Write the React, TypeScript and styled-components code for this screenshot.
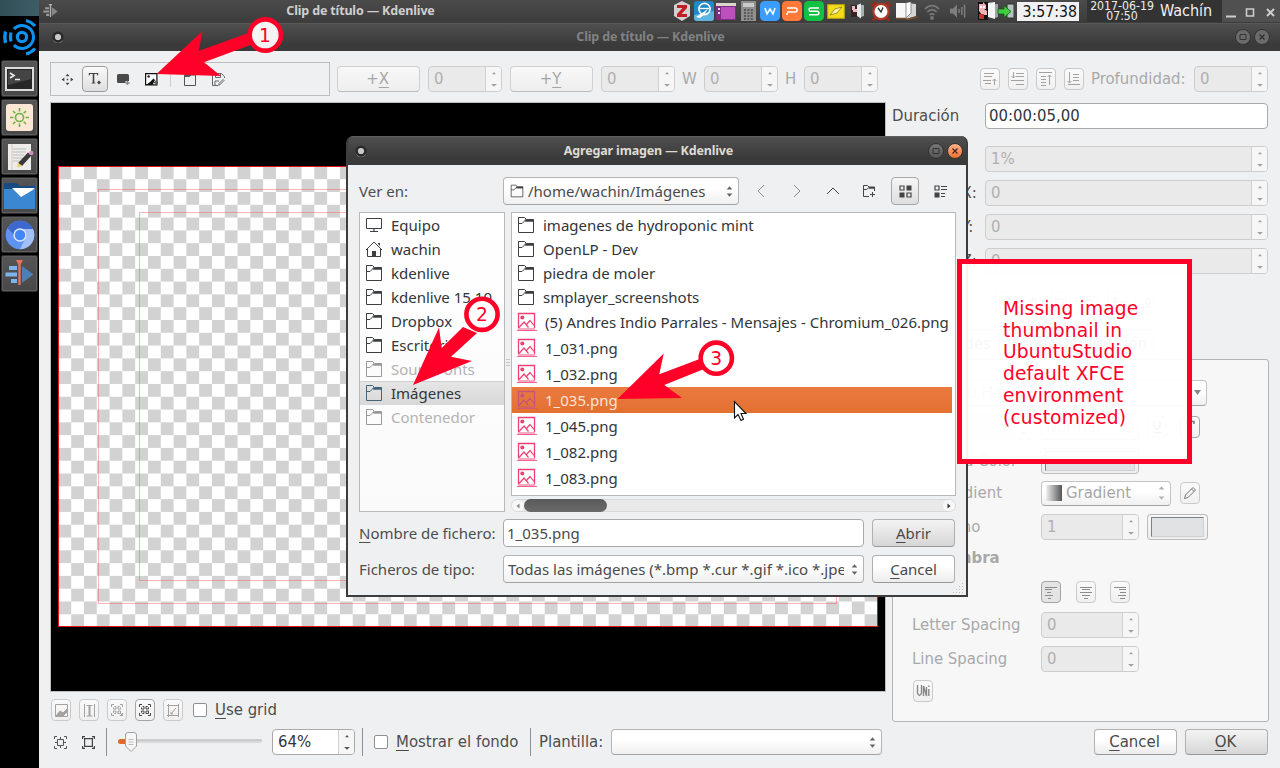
import React from "react";
import styled, { createGlobalStyle, css } from "styled-components";

const condensed = `"DejaVu Sans Condensed", "DejaVu Sans", sans-serif`;
const noto = `"Noto Sans", "Open Sans", sans-serif`;

const Global = createGlobalStyle`
  * { box-sizing: border-box; }
  body { margin: 0; background: #000; overflow: hidden; }
  svg { display: block; flex: none; }
  u { text-decoration: underline; text-decoration-thickness: 1px; text-underline-offset: 3px; }
`;

/* ---------- desktop ---------- */

const Desktop = styled.div`
  position: relative;
  display: flex;
  width: 1280px;
  height: 768px;
  background: #000;
  overflow: hidden;
  font: 16.6px/20px ${condensed};
  color: #31363b;
  white-space: nowrap;
`;
const Dock = styled.div`
  width: 39px;
  flex: none;
  display: flex;
  flex-direction: column;
  align-items: flex-start;
  padding-left: 1px;
`;
const Wallpaper = styled.div`
  height: 16px;
  width: 39px;
  margin-left: -1px;
  background: linear-gradient(90deg, #2f4f57, #3f5d66);
`;
const DockLogo = styled.div`
  height: 44px;
  padding-top: 3px;
`;
const DockTile = styled.div`
  width: 37px;
  height: 37px;
  margin-bottom: 2px;
  display: flex;
  align-items: center;
  justify-content: center;
  background: linear-gradient(#555, #484848);
  border: 1px solid #2e2e2e;
  border-radius: 2px;
  box-shadow: inset 0 0 0 1px #5e5e5e;
`;
const Screen = styled.div`
  flex: 1;
  display: flex;
  flex-direction: column;
`;
const Panel = styled.div`
  height: 23px;
  display: flex;
  align-items: center;
  background: linear-gradient(#4b4b4b, #3c3c3c);
  padding: 0 0 1px 4px;
  flex: none;
`;
const PanelTitle = styled.div<{ $w: number }>`
  width: ${(p) => p.$w}px;
  font: bold 12.5px/18px ${noto};
  letter-spacing: -0.16px;
  color: #cfcfcf;
  text-align: center;
`;
const TrayIcon = styled.div<{ $w: number; $gap?: number }>`
  width: ${(p) => p.$w}px;
  margin-right: ${(p) => p.$gap ?? 2}px;
  flex: none;
  height: 21px;
  display: flex;
  align-items: center;
  justify-content: center;
`;
const PanelClock = styled.div`
  width: 62px;
  height: 19px;
  padding-right: 2px;
  flex: none;
  text-align: right;
  background: #f1f1f1;
  color: #111;
  font-size: 15.7px;
  line-height: 20px;
  margin-right: 8px;
`;
const DateBlock = styled.div`
  width: 70px;
  height: 22px;
  flex: none;
  background: #333;
  color: #eee;
  font-size: 12.2px;
  line-height: 10px;
  padding-top: 1px;
  text-align: center;
`;
const UserName = styled.div`
  width: 65px;
  height: 22px;
  flex: none;
  background: #333;
  color: #f0f0f0;
  padding: 1px 0 0 3px;
  font-size: 16px;
  line-height: 20px;
`;
const WinControls = styled.div`
  flex: 1;
  height: 22px;
  display: flex;
  align-items: center;
  justify-content: center;
  background: #505050;
`;

/* ---------- window chrome ---------- */

const TitleBar = styled.div<{ $active?: boolean }>`
  height: ${(p) => (p.$active ? 29 : 28)}px;
  flex: none;
  display: flex;
  align-items: center;
  background: linear-gradient(#4f4f4f, #3a3a3a 75%);
  color: ${(p) => (p.$active ? "#dfdbd2" : "#828282")};
  font: bold 12.5px/20px ${noto};
  letter-spacing: -0.16px;
  ${(p) =>
    p.$active
      ? css`
          padding: 0 3px 1px 7px;
          border-top: 1px solid #5e5e5e;
        `
      : css`
          padding: 0 10px 1px 13px;
          border-top: 1px solid #585858;
        `}
`;
const TitleText = styled.div<{ $pad: number }>`
  flex: 1;
  text-align: center;
  padding-right: ${(p) => p.$pad}px;
`;
const TitleButtons = styled.div`
  display: flex;
  gap: 3px;
`;
const RoundButton = styled.div<{ $bg: string }>`
  width: 16px;
  height: 16px;
  border-radius: 50%;
  background: ${(p) => p.$bg};
  border: 1px solid #333;
  display: flex;
  align-items: center;
  justify-content: center;
`;
const TitleSpacer = styled.div`
  width: 40px;
  display: flex;
`;

const Body = styled.div`
  flex: 1;
  background: #eff0f1;
  padding: 11px 11px 0 11px;
  display: flex;
  flex-direction: column;
`;

/* ---------- shared controls ---------- */

const Button = styled.div<{ $w: number; $h?: number; $dim?: boolean; $primary?: boolean; $strong?: boolean }>`
  width: ${(p) => p.$w}px;
  height: ${(p) => p.$h ?? 26}px;
  flex: none;
  display: flex;
  align-items: center;
  justify-content: center;
  padding-right: ${(p) => (p.$h ? 0 : 2)}px;
  border-radius: 4px;
  border: 1px solid ${(p) => (p.$strong ? "#bbb" : p.$dim ? "#d0d0d0" : "#b0b0b0")};
  border-bottom-color: ${(p) => (p.$dim ? "#bcbcbc" : "#999")};
  background: ${(p) =>
    p.$primary ? "linear-gradient(#f4f4f4, #d6d6d6)" : p.$dim ? "linear-gradient(#f8f8f8, #eee)" : "linear-gradient(#fff 40%, #ececec)"};
  color: ${(p) => (p.$dim ? "#a6a6a6" : "#4a4a4a")};
`;
const MiniButton = styled.div<{ $on?: boolean; $pressed?: boolean; $ml?: number; $mt?: number }>`
  width: 20px;
  height: 22px;
  margin-left: ${(p) => p.$ml ?? 0}px;
  margin-top: ${(p) => p.$mt ?? 0}px;
  flex: none;
  border-radius: 4px;
  border: 1px solid ${(p) => (p.$on || p.$pressed ? "#a5a5a5" : "#cacaca")};
  background: ${(p) => (p.$pressed ? "#e4e4e4" : "linear-gradient(#fafafa, #f0f0f0)")};
  color: ${(p) => (p.$on ? "#444" : "#a2a2a2")};
  display: flex;
  align-items: center;
  justify-content: center;
`;
const SpinBox = styled.div<{ $w: number; $on?: boolean; $ml?: number }>`
  width: ${(p) => p.$w}px;
  height: 26px;
  margin-left: ${(p) => p.$ml ?? 0}px;
  flex: none;
  display: flex;
  border-radius: 4px;
  overflow: hidden;
  border: 1px solid ${(p) => (p.$on ? "#a9a9a9" : "#cdcdcd")};
  background: ${(p) => (p.$on ? "#fff" : "#eaeaea")};
  color: ${(p) => (p.$on ? "#31363b" : "#b0b0b0")};
`;
const SpinValue = styled.div`
  flex: 1;
  padding-left: 5px;
  line-height: 24px;
`;
const SpinArrows = styled.div<{ $on?: boolean }>`
  width: 16px;
  border-left: 1px solid #d0d0d0;
  background: #f6f6f6;
  color: ${(p) => (p.$on ? "#555" : "#a0a0a0")};
  display: flex;
  align-items: center;
  justify-content: center;
`;
const Combo = styled.div<{ $w: number; $h?: number; $dim?: boolean; $ml?: number }>`
  width: ${(p) => p.$w}px;
  height: ${(p) => p.$h ?? 26}px;
  margin-left: ${(p) => p.$ml ?? 0}px;
  flex: none;
  display: flex;
  align-items: center;
  justify-content: space-between;
  padding: 0 4px;
  border-radius: 4px;
  border: 1px solid ${(p) => (p.$dim ? "#c4c4c4" : "#b4b4b4")};
  border-bottom-color: #a4a4a4;
  background: linear-gradient(#fff 40%, #f0f0f0);
  color: ${(p) => (p.$dim ? "#a6a6a6" : "#4a4a4a")};
`;
const ComboText = styled.span<{ $pad?: number }>`
  flex: 1;
  overflow: hidden;
  margin-right: 6px;
  padding-left: ${(p) => p.$pad ?? 0}px;
  display: flex;
  align-items: center;
  gap: 4px;
`;
const Input = styled.div<{ $w: number; $h?: number }>`
  width: ${(p) => p.$w}px;
  height: ${(p) => p.$h ?? 26}px;
  flex: none;
  display: flex;
  align-items: center;
  padding-left: 3px;
  border-radius: 4px;
  border: 1px solid #aaa;
  background: #fff;
`;
const CheckBox = styled.div`
  width: 14px;
  height: 14px;
  border: 1px solid #909090;
  border-radius: 2px;
  background: #fff;
  flex: none;
`;
const Label = styled.div<{ $w?: number; $dim?: boolean; $bold?: boolean; $ml?: number; $indent?: number }>`
  ${(p) => p.$w !== undefined && `width: ${p.$w}px;`}
  margin-left: ${(p) => p.$ml ?? 0}px;
  padding-left: ${(p) => p.$indent ?? 0}px;
  flex: none;
  color: ${(p) => (p.$dim ? "#a9a9a9" : "#4d4d4d")};
  font-weight: ${(p) => (p.$bold ? "bold" : "normal")};
`;
const Divider = styled.div<{ $h: number; $ml?: number; $mr?: number; $light?: boolean }>`
  width: 1px;
  height: ${(p) => p.$h}px;
  margin: 0 ${(p) => p.$mr ?? 0}px 0 ${(p) => p.$ml ?? 0}px;
  background: ${(p) => (p.$light ? "#cfcfcf" : "#8d9095")};
  flex: none;
`;

const Updown = ({ gap = 4 }: { gap?: number }) => (
  <svg width="9" height={12 + gap} viewBox={`0 0 9 ${12 + gap}`} fill="currentColor" opacity=".85">
    <path d="M4.5 1.2L7.3 4.4H1.7Z" />
    <path d={`M1.7 ${7.6 + gap}H7.3L4.5 ${10.8 + gap}Z`} />
  </svg>
);
const Spin = ({ w, v, on, ml }: { w: number; v: string; on?: boolean; ml?: number }) => (
  <SpinBox $w={w} $on={on} $ml={ml}>
    <SpinValue>{v}</SpinValue>
    <SpinArrows $on={on}>
      <svg width="8" height="18" viewBox="0 0 8 18" fill="currentColor">
        <path d="M4 2L6 4.3H2Z" />
        <path d="M1.2 14H6.8L4 16.8Z" />
      </svg>
    </SpinArrows>
  </SpinBox>
);

/* ---------- title editor ---------- */

const TopRow = styled.div`
  display: flex;
  align-items: center;
  height: 34px;
`;
const ToolBox = styled.div`
  width: 280px;
  height: 34px;
  border: 1px solid #bdbdbd;
  display: flex;
  align-items: center;
  padding-left: 10px;
  margin-right: 7px;
  color: #444;
  flex: none;
`;
const ToolButton = styled.div`
  width: 26px;
  height: 26px;
  margin: 0 9px 0 8px;
  border: 1px solid #9d9d9d;
  border-radius: 4px;
  background: linear-gradient(#fafafa, #dedede);
  display: flex;
  align-items: center;
  justify-content: center;
`;
const Gap = styled.div<{ $w: number }>`
  width: ${(p) => p.$w}px;
  flex: none;
`;
const Middle = styled.div`
  display: flex;
  margin-top: 6px;
  height: 620px;
`;
const Stage = styled.div`
  width: 836px;
  height: 590px;
  flex: none;
  background: #000;
  border: 1px solid #bdbdbd;
  padding: 63px 0 0 7px;
`;
const Checker = styled.div`
  width: 820px;
  height: 461px;
  border: 1px solid #e01414;
  padding: 22px 40px 22px 39px;
  background: conic-gradient(#fff 25%, #d2d2d2 0 50%, #fff 0 75%, #d2d2d2 0) -0.6px -0.6px / 25.6px 25.6px;
`;
const SafeOuter = styled.div`
  height: 100%;
  border: 1px solid rgba(255, 60, 60, 0.38);
  padding: 22px 40px;
`;
const SafeInner = styled.div`
  height: 100%;
  border: 1px solid rgba(255, 60, 60, 0.38);
`;
const Side = styled.div`
  width: 377px;
  margin-left: 6px;
  padding-top: 1px;
  display: flex;
  flex-direction: column;
`;
const FormRow = styled.div<{ $mb?: number }>`
  display: flex;
  align-items: center;
  justify-content: space-between;
  height: 26px;
  margin-bottom: ${(p) => p.$mb ?? 8}px;
  padding-right: 1px;
  flex: none;
`;
const HLine = styled.div`
  height: 1px;
  background: #8d9095;
  margin-bottom: 10px;
`;
const AlignRow = styled.div`
  display: flex;
  gap: 8px;
  padding-left: 103px;
  margin-top: 9px;
`;
const Tabs = styled.div`
  display: flex;
  height: 30px;
  margin-top: 16px;
  align-items: center;
  color: #777;
`;
const Tab = styled.div<{ $w: number }>`
  width: ${(p) => p.$w}px;
  height: 30px;
  border: 1px solid #ccc;
  line-height: 28px;
  text-align: right;
  padding-right: 7px;
`;
const Pane = styled.div`
  height: 363px;
  flex: none;
  background: #f7f7f7;
  border: 1px solid #b4b4b4;
  border-radius: 3px;
  padding: 20px 0 0 19px;
`;
const PaneRow = styled.div<{ $h: number }>`
  display: flex;
  align-items: center;
  height: ${(p) => p.$h}px;
`;
const Swatch = styled.div`
  width: calc(100% - 4px);
  margin-left: 2px;
  height: 20px;
  background: #e1e2e4;
  border: 1px solid #cfd0d2;
  border-top-color: #7d8085;
  border-left-color: #7d8085;
`;
const Footer = styled.div`
  display: flex;
  flex-direction: column;
  margin-top: -23px;
  z-index: 1;
`;
const FootRow = styled.div<{ $h: number; $pad?: number }>`
  display: flex;
  align-items: center;
  height: ${(p) => p.$h}px;
  padding-left: ${(p) => p.$pad ?? 0}px;
`;
const Slider = styled.div`
  width: 145px;
  flex: none;
`;

/* ---------- file dialog ---------- */

const Dialog = styled.div`
  position: absolute;
  left: 346px;
  top: 136px;
  width: 622px;
  height: 461px;
  border: 2px solid #3d3d3d;
  border-top: 0;
  border-radius: 7px 7px 0 0;
  background: #3d3d3d;
  display: flex;
  flex-direction: column;
  overflow: hidden;
  font: 15px/20px ${noto};
`;
const DialogBody = styled.div`
  flex: 1;
  background: #eff0f1;
  padding: 12px 10px 0 11px;
  display: flex;
  flex-direction: column;
`;
const DRow = styled.div<{ $mb: number }>`
  display: flex;
  align-items: center;
  height: 28px;
  margin-bottom: ${(p) => p.$mb}px;
  color: #4a4a4a;
`;
const NavIcon = styled.div<{ $dim?: boolean }>`
  width: 36px;
  display: flex;
  justify-content: center;
  color: ${(p) => (p.$dim ? "#8c8c8c" : "#444")};
`;
const ViewButton = styled.div`
  width: 28px;
  height: 28px;
  margin: 0 15px 0 4px;
  border: 1px solid #a8a8a8;
  border-radius: 4px;
  background: linear-gradient(#f6f6f6, #dedede);
  display: flex;
  align-items: center;
  justify-content: center;
`;
const Lists = styled.div`
  display: flex;
  height: 300px;
  margin-bottom: 7px;
`;
const Places = styled.div`
  width: 146px;
  flex: none;
  border: 1px solid #b9b9b9;
  background: linear-gradient(#fff, #fafafa);
`;
const Place = styled.div<{ $state?: "off" | "sel" }>`
  height: 24px;
  display: flex;
  align-items: center;
  gap: 8px;
  padding-left: 5px;
  color: ${(p) => (p.$state === "off" ? "#b3b3b3" : "#31363b")};
  ${(p) =>
    p.$state === "sel" &&
    css`
      background: linear-gradient(#e6e6e6, #d8d8d8);
      box-shadow: inset 0 1px #cfcfcf;
    `}
`;
const Splitter = styled.div`
  width: 6px;
  display: flex;
  align-items: center;
  justify-content: center;
`;
const FilePane = styled.div`
  width: 445px;
  flex: none;
  display: flex;
  flex-direction: column;
`;
const Files = styled.div`
  height: 284px;
  border: 1px solid #b9b9b9;
  background: #fff;
  padding: 0 3px 0 0;
  margin-bottom: 3px;
`;
const Folder = styled.div`
  height: 24px;
  display: flex;
  align-items: center;
  gap: 8px;
  padding-left: 5px;
`;
const Picture = styled.div<{ $sel?: boolean }>`
  height: 26px;
  display: flex;
  align-items: center;
  gap: 8px;
  padding-left: 5px;
  color: ${(p) => (p.$sel ? "#f7e4da" : "#31363b")};
  background: ${(p) => (p.$sel ? "linear-gradient(#eb7a40, #e27030)" : "none")};
`;
const ScrollBar = styled.div`
  height: 13px;
  border: 1px solid #d8d8d8;
  border-radius: 7px;
  background: #e9e9e9;
  display: flex;
  align-items: center;
  justify-content: space-between;
  color: #555;
`;
const ScrollEnd = styled.div<{ $faint?: boolean }>`
  width: 12px;
  height: 11px;
  border-radius: 6px;
  background: #f7f7f7;
  display: flex;
  align-items: center;
  justify-content: center;
  color: ${(p) => (p.$faint ? "#8a8a8a" : "#333")};
`;
const Thumb = styled.div`
  width: 83px;
  height: 13px;
  border-radius: 7px;
  background: linear-gradient(#5a5a5a, #6a6a6a);
`;
const Grip = styled.div`
  align-self: flex-end;
  margin: -1px -8px 0 0;
`;

/* ---------- annotations ---------- */

const Note = styled.div`
  position: absolute;
  left: 957px;
  top: 259px;
  width: 235px;
  height: 205px;
  border: 5px solid #ff0028;
  background: rgba(255, 255, 255, 0.945);
  color: #ff0028;
  font: 18.67px/21.7px "DejaVu Sans", sans-serif;
  letter-spacing: 0.14px;
  padding: 34px 0 0 41px;
  white-space: pre;
`;
const Overlay = styled.svg`
  position: absolute;
  left: 0;
  top: 0;
  pointer-events: none;
`;

/* ---------- icons ---------- */

const FolderIcon = ({ c = "#3d4043", s = 18 }: { c?: string; s?: number }) => (
  <svg width={s} height={s} viewBox="0 0 18 18" fill="none" stroke={c}>
    <path d="M1.5 1.5H7.5L9.5 3.5H16.5V16.5H1.5ZM1.5 7.5H5L9 3.5" />
    <path d="M8 5.5L9.5 4H16.5V5.5Z" fill={c} stroke="none" />
    <path d="M8 4.5H16.5" strokeWidth="2" />
  </svg>
);
const PictureIcon = ({ c = "#ef4070" }: { c?: string }) => (
  <svg width="20" height="20" viewBox="0 0 20 20" fill="none" stroke={c}>
    <path d="M1.5 16V1.5H17.5V16" strokeWidth="1.3" />
    <path d="M0 18.5H20" strokeWidth="1" opacity=".8" />
    <path d="M1 16H18V18H1Z" fill={c} stroke="none" opacity=".45" />
    <circle cx="5.3" cy="5.5" r="2" fill={c} stroke="none" />
    <path d="M2 15.5L7 10L11.5 15.5M9.5 12.5L13 8.5L17 13.5" strokeWidth="1.2" />
  </svg>
);
const PcIcon = () => (
  <svg width="18" height="18" viewBox="0 0 18 18" fill="none" stroke="#3d4043">
    <path d="M1.5 2.5H16.5V12.5H1.5Z" />
    <path d="M9 12.5V15M5 15.5H13" strokeWidth="1.2" />
  </svg>
);
const HomeIcon = () => (
  <svg width="18" height="18" viewBox="0 0 18 18" fill="none" stroke="#3d4043">
    <path d="M2.5 9V16.5H15.5V9M1 10L9 2L17 10" />
    <path d="M7 11H11V16.5H7ZM13 3H15V6L13 4Z" fill="#3d4043" stroke="none" />
  </svg>
);
const Knob = () => (
  <svg width="12" height="12" viewBox="0 0 12 12">
    <circle cx="6" cy="6" r="5.6" fill="#2b2b2b" />
    <path d="M1.5 9.5A5 5 0 0 0 10.5 9.5" fill="none" stroke="#777" />
    <circle cx="6" cy="6" r="3.1" fill="#c9c9c9" />
  </svg>
);
const KdenliveIcon = ({ gray }: { gray?: boolean }) => {
  const k = gray ? ["#9a9a9a", "#b0b0b0", "#888"] : ["#7cb4ec", "#e8705f", "#4a7fb8"];
  const s = gray ? 15 : 29;
  return (
    <svg width={s} height={s * 0.9} viewBox="0 0 29 26">
      <path d="M4 6H12V10H4ZM0.5 12.5H12V16.5H0.5ZM6 19H12V23H6Z" fill={k[0]} />
      <path d="M17 6L28.5 14.5L17 23Z" fill={k[2]} />
      <path d="M11 0H18L15.7 4.5V25H13.3V4.5Z" fill={k[1]} />
    </svg>
  );
};
const LinesIcon = ({ kind }: { kind: number }) => (
  <svg width="16" height="16" viewBox="0 0 16 16" fill="none" stroke="currentColor">
    {kind === 0 && <path d="M2 2.5H12M2 5.5H10M1 9.5H9M3 12.5H9M12.5 14V8M10.5 10L12.5 8L14.5 10" />}
    {kind === 1 && <path d="M6 2.5H14M6 5.5H14M1 9.5H14M6 13.5H14M3.5 1V7M1.5 5L3.5 7L5.5 5" />}
    {kind === 2 && <path d="M1 1.5H14M3 5.5H8M3 8.5H8M3 11.5H8M3 14.5H8M11.5 14V4M9.5 6L11.5 4L13.5 6" />}
    {kind === 3 && <path d="M7 3.5H13M7 6.5H13M7 9.5H13M2 13.5H14M3.5 1V12M1.5 10L3.5 12L5.5 10" />}
  </svg>
);
const TextAlign = ({ d }: { d: string }) => (
  <svg width="14" height="16" viewBox="0 0 14 16" fill="none" stroke="#8c8c8c">
    <path d={d} />
  </svg>
);
const GroupIcon = ({ x }: { x?: boolean }) => (
  <svg width="14" height="14" viewBox="0 0 14 14" fill="none" stroke="currentColor">
    <path d="M1.5 4V1.5H4M10 1.5H12.5V4M1.5 10V12.5H4M12.5 10V12.5H10" />
    <path d="M4.5 3.5H6V6H3.5V4.5M8 6V3.5H9.5L10.5 4.5V6ZM3.5 8H6V10.5H4.5L3.5 9.5ZM8 8H10.5V10.5H8Z" />
    {x && <path d="M10 10L13 13M13 10L10 13" />}
  </svg>
);

const Tray = () => (
  <>
    <TrayIcon $w={18}>
      <svg width="16" height="20" viewBox="0 0 16 20">
        <path d="M8 0L16 4V15L8 20L0 15V4Z" fill="#d4d0d0" />
        <path d="M3 4H13V7L7.5 13H13V16H3V13L8.5 7H3Z" fill="#c21d24" />
      </svg>
    </TrayIcon>
    <TrayIcon $w={21}>
      <svg width="20" height="20" viewBox="0 0 20 20">
        <rect width="20" height="20" rx="3" fill="#2089c9" />
        <path d="M0 14L20 10V17Q20 20 17 20H3Q0 20 0 17Z" fill="#5fb4e0" />
        <circle cx="10.5" cy="8" r="5.6" fill="none" stroke="#fff" strokeWidth="1.6" />
        <path d="M6 7.5H15" stroke="#fff" strokeWidth="1.4" />
        <path d="M2 16L14 8L10 14L6 17Z" fill="#fff" />
      </svg>
    </TrayIcon>
    <TrayIcon $w={20} $gap={4}>
      <svg width="20" height="17" viewBox="0 0 20 17">
        <rect width="20" height="17" rx="1" fill="#7b2e86" />
        <rect x="5" y="4" width="14" height="12" fill="#bb4fbc" />
        <rect width="20" height="3" fill="#dcd6cc" />
        <path d="M2 5h2v2H2zM2 9h2v2H2z" fill="#e8d8ea" />
      </svg>
    </TrayIcon>
    <TrayIcon $w={16} $gap={4}>
      <svg width="15" height="20" viewBox="0 0 15 20">
        <rect width="15" height="20" fill="#8f8f8f" />
        <rect x="2" y="2" width="11" height="4" fill="#c9cdc9" />
        <path d="M3 9H13M3 12H13M3 15H13M3 18H13" stroke="#4a4a4a" strokeWidth="1.6" strokeDasharray="2 1.4" />
      </svg>
    </TrayIcon>
    {[
      ["#3b9dff", "M5 7L7 13L10 8L13 13L15 7"],
      ["#ff7a38", "M5 14V12M5 7H13.5C15.5 7 15.5 11 13.5 11H5"],
      ["#10c144", "M15 7H7C4.5 7 4.5 10.3 7 10.3H13C15.5 10.3 15.5 13.8 13 13.8H5"],
    ].map(([bg, d]) => (
      <TrayIcon key={bg} $w={20}>
        <svg width="20" height="20" viewBox="0 0 20 20">
          <rect width="20" height="20" rx="4.5" fill={bg} />
          <path d={d} fill="none" stroke="#fff" strokeWidth="1.5" />
        </svg>
      </TrayIcon>
    ))}
    <TrayIcon $w={20} $gap={3}>
      <svg width="18" height="15" viewBox="0 0 18 15">
        <rect x=".7" y=".7" width="16.6" height="13.6" fill="#f3dc1c" stroke="#c2aa0c" />
        <path d="M3 11L8 5L15 3L10 9Z" fill="#fff6a8" stroke="#8a7a12" strokeWidth=".8" />
      </svg>
    </TrayIcon>
    <TrayIcon $w={16} $gap={6}>
      <svg width="15" height="16" viewBox="0 0 15 16">
        <path d="M1 2H8V14H1Z" fill="#332425" />
        <path d="M2 3H5V6H7V9H3V7H2Z" fill="#f0b9c0" />
        <path d="M7 2L11 0.5V15.5L7 13Z" fill="#e8e8e8" />
        <path d="M11 2H14V13L11 14Z" fill="#a4b0b4" />
      </svg>
    </TrayIcon>
    <TrayIcon $w={20} $gap={4}>
      <svg width="20" height="20" viewBox="0 0 20 20">
        <path d="M4 17L2 20M16 17L18 20M1 5L5 1M19 5L15 1" stroke="#9c2a1c" strokeWidth="3" />
        <circle cx="10" cy="10.5" r="7.6" fill="#fdfdfd" stroke="#b23a25" strokeWidth="2.2" />
        <path d="M7 7L10 11L12 6.5" fill="none" stroke="#333" strokeWidth="1.4" />
      </svg>
    </TrayIcon>
    <TrayIcon $w={24} $gap={4}>
      <svg width="22" height="18" viewBox="0 0 22 18">
        <path d="M0 1H10V16H0Z" fill="#f7f7f7" />
        <path d="M10 1L20 2V14L10 17Z" fill="#d5d5d5" />
        <path d="M10 1L15 0V11L10 16Z" fill="#fff" />
        <path d="M10 1V16M15 0V11L10 16" stroke="#777" strokeWidth=".8" fill="none" />
        <path d="M0 16.5H9L11 17.5L22 15" stroke="#7a4b2a" strokeWidth="1.5" fill="none" />
      </svg>
    </TrayIcon>
    <TrayIcon $w={18} $gap={8}>
      <svg width="16" height="17" viewBox="0 0 16 17" fill="none" stroke="#777" strokeWidth="1.8">
        <path d="M1 6C5 1.5 11 1.5 15 6M3.3 9C6 6 10 6 12.7 9M5.6 12C7 10.5 9 10.5 10.4 12" />
        <circle cx="8" cy="15" r="1" fill="#777" />
      </svg>
    </TrayIcon>
    <TrayIcon $w={17} $gap={11}>
      <svg width="16" height="16" viewBox="0 0 16 16" fill="none" stroke="#7d7d7d" strokeWidth="1.5">
        <path d="M0 5.5H3L7 1.5V14.5L3 10.5H0Z" fill="#7d7d7d" stroke="none" />
        <path d="M9 6V10M11.8 4V12M14.6 1.5V14.5" />
      </svg>
    </TrayIcon>
    <TrayIcon $w={37} $gap={3}>
      <svg width="36" height="18" viewBox="0 0 36 18">
        <path d="M0 0H10V18H0Z" fill="#111" />
        <path d="M1 2H5V0L8 3V7H6L9 9V13H4L1 9Z" fill="#f4b0b8" />
        <path d="M1 12H6V17H1Z" fill="#c83030" />
        <path d="M2 4h2v2H2zM5 4h2v2H5z" fill="#fff" />
        <path d="M10 1L17 0V17L10 15Z" fill="#f4f4f4" />
        <path d="M17 2H20V15L17 16Z" fill="#9aa6a2" />
        <path d="M29 2H36V16H29Z" fill="#b4c4c0" stroke="#333" />
        <path d="M20 7H26V3.5L33 9.5L26 15.5V12H20Z" fill="#3fce3f" stroke="#125812" strokeWidth=".8" />
      </svg>
    </TrayIcon>
  </>
);

const tools = (
  <ToolBox>
    <svg width="13" height="13" viewBox="0 0 13 13" fill="currentColor">
      <path d="M6.5 0L8.7 3H4.3ZM6.5 13L8.7 10H4.3ZM0 6.5L3 4.3V8.7ZM13 6.5L10 4.3V8.7ZM5.7 5.7h1.6v1.6H5.7z" transform="translate(.65 .65) scale(.9)" />
    </svg>
    <ToolButton>
      <svg width="14" height="14" viewBox="0 0 14 14">
        <path d="M.8 1H10.2V3.5H9.5L8.8 2H6.3V10.5L7.5 11V11.5H3.5V11L4.7 10.5V2H2.2L1.5 3.5H.8Z" fill="#444" />
        <path d="M11 8.5L13 10.5L11 12.5L9 10.5Z" fill="#444" />
      </svg>
    </ToolButton>
    <svg width="13" height="12" viewBox="0 0 13 12">
      <path d="M1.5 1H10.5Q12 1 12 2.5V8H8.5V10H1.5Q0 10 0 8.5V2.5Q0 1 1.5 1Z" fill="#4a4a4a" />
      <path d="M10.5 8V12M8.5 10H12.5" stroke="#888" strokeWidth="1.4" />
    </svg>
    <Gap $w={15} />
    <svg width="13" height="13" viewBox="0 0 13 13">
      <path d="M.6.6H11.9V11.9H.6Z" fill="#fff" stroke="#111" strokeWidth="1.2" />
      <path d="M1 12L5 9L8.5 5.5L10 7L7.5 12Z" fill="#111" />
      <path d="M9 9.5H13M11 7.5V12.5" stroke="#555" strokeWidth="1.4" />
      <circle cx="3.6" cy="3.4" r="1.2" fill="#111" />
    </svg>
    <Divider $h={16} $ml={12} $mr={13} $light />
    <svg width="12" height="13" viewBox="0 0 12 13" fill="none" stroke="#555">
      <path d="M.5 1.5H11.5V12.5H.5Z" />
      <path d="M.5 3H5L7 1.5H11.5" strokeWidth="2" />
    </svg>
    <Gap $w={16} />
    <svg width="13" height="13" viewBox="0 0 13 13" fill="none" stroke="#666">
      <path d="M6 12.5H.5V.5H9.5L12.5 3.5V5M3.5 1V4.5H8.5V1M3 12V8H7M7 12.5L12 7.5L11 6.5L7 10.5Z" />
    </svg>
  </ToolBox>
);

const places: [string, ("off" | "sel")?][] = [
  ["Equipo"], ["wachin"], ["kdenlive"], ["kdenlive 15.10"], ["Dropbox"], ["Escritorio"], ["SoundFonts", "off"], ["Imágenes", "sel"], ["Contenedor", "off"],
];
const folders = ["imagenes de hydroponic mint", "OpenLP - Dev", "piedra de moler", "smplayer_screenshots"];
const pictures = ["(5) Andres Indio Parrales - Mensajes - Chromium_026.png", "1_031.png", "1_032.png", "1_035.png", "1_045.png", "1_082.png", "1_083.png"];

const FileDialog = () => (
  <Dialog>
    <TitleBar $active>
      <TitleSpacer><Knob /></TitleSpacer>
      <TitleText $pad={26}>Agregar imagen — Kdenlive</TitleText>
      <TitleButtons>
        <RoundButton $bg="linear-gradient(#777,#555)"><svg width="8" height="8"><path d="M1 1.5H7V6.5H1Z" fill="none" stroke="#333" /></svg></RoundButton>
        <RoundButton $bg="linear-gradient(#fbb48c,#f07030)"><svg width="6" height="6"><path d="M.5 .5L5.5 5.5M5.5 .5L.5 5.5" stroke="#4a2818" strokeWidth="1.3" /></svg></RoundButton>
      </TitleButtons>
    </TitleBar>
    <DialogBody>
      <DRow $mb={7}>
        <Label $w={144}>Ver en:</Label>
        <Combo $w={236} $h={28}>
          <ComboText $pad={2}><FolderIcon s={14} />/home/wachin/Imágenes</ComboText>
          <Updown gap={1} />
        </Combo>
        <Gap $w={4} />
        <NavIcon $dim><svg width="8" height="14" fill="none" stroke="currentColor"><path d="M7 1L1 7L7 13" /></svg></NavIcon>
        <NavIcon $dim><svg width="8" height="14" fill="none" stroke="currentColor"><path d="M1 1L7 7L1 13" /></svg></NavIcon>
        <NavIcon><svg width="14" height="8" fill="none" stroke="currentColor"><path d="M1 7L7 1L13 7" /></svg></NavIcon>
        <NavIcon>
          <svg width="14" height="14" viewBox="0 0 14 14" fill="none" stroke="currentColor">
            <path d="M7 12.5H1.5V1.5H5.5L7 3H12.5V7M1.5 5.5H4.5L7 3.5H12.5" />
            <path d="M7 4H12.5" strokeWidth="1.5" />
            <path d="M10.5 8V13M8 10.5H13" />
          </svg>
        </NavIcon>
        <ViewButton>
          <svg width="13" height="13" viewBox="0 0 13 13" fill="none" stroke="#444">
            <path d="M1 1H5V5H1ZM8 8H12V12H8Z" strokeWidth="1.2" />
            <path d="M7.5.5H12.5V5.5H7.5ZM.5 7.5H5.5V12.5H.5Z" fill="#444" stroke="none" />
          </svg>
        </ViewButton>
        <svg width="14" height="13" viewBox="0 0 14 13" fill="none" stroke="#444">
          <path d="M1 1H5V5H1Z" strokeWidth="1.2" />
          <path d="M.5 7.5H5.5V12.5H.5Z" fill="#444" stroke="none" />
          <path d="M7 1.5H13M7 4.5H13M7 8.5H11M7 11.5H11" />
        </svg>
      </DRow>
      <Lists>
        <Places>
          {places.map(([n, st], i) => (
            <Place key={n} $state={st}>
              {i === 0 ? <PcIcon /> : i === 1 ? <HomeIcon /> : <FolderIcon c={st === "off" ? "#999" : st === "sel" ? "#456478" : "#3d4043"} />}
              {n}
            </Place>
          ))}
        </Places>
        <Splitter>
          <svg width="4" height="9" stroke="#c4c4c4"><path d="M0 1.5H4M0 4.5H4M0 7.5H4" /></svg>
        </Splitter>
        <FilePane>
          <Files>
            {folders.map((n) => <Folder key={n}><FolderIcon />{n}</Folder>)}
            {pictures.map((n) => (
              <Picture key={n} $sel={n === "1_035.png"}>
                <PictureIcon c={n === "1_035.png" ? "#c4557a" : undefined} />
                {n}
              </Picture>
            ))}
          </Files>
          <ScrollBar>
            <ScrollEnd $faint><svg width="4" height="6" fill="currentColor"><path d="M3.5 .5V5.5L.5 3Z" /></svg></ScrollEnd>
            <Thumb />
            <Gap $w={336} />
            <ScrollEnd><svg width="4" height="6" fill="currentColor"><path d="M.5 .5V5.5L3.5 3Z" /></svg></ScrollEnd>
          </ScrollBar>
        </FilePane>
      </Lists>
      <DRow $mb={8}>
        <Label $w={144}><u>N</u>ombre de fichero:</Label>
        <Input $w={361} $h={28}>1_035.png</Input>
        <Gap $w={8} />
        <Button $w={83} $h={28} $primary><u>A</u>brir</Button>
      </DRow>
      <DRow $mb={0}>
        <Label $w={144}>Ficheros de tipo:</Label>
        <Combo $w={361} $h={28}>
          <ComboText>Todas las imágenes (*.bmp *.cur *.gif *.ico *.jpe</ComboText>
          <Updown gap={1} />
        </Combo>
        <Gap $w={8} />
        <Button $w={83} $h={28}><u>C</u>ancel</Button>
      </DRow>
      <Grip>
        <svg width="11" height="11" viewBox="0 0 11 11" stroke="#c0c0c0" strokeWidth="1" strokeDasharray="1 2">
          <path d="M9 1.5H11M6 4.5H11M3 7.5H11M0 10.5H11" />
        </svg>
      </Grip>
    </DialogBody>
  </Dialog>
);

export default function App() {
  return (
    <>
      <Global />
      <Desktop>
        <Dock>
          <Wallpaper />
          <DockLogo>
            <svg width="35" height="37" viewBox="0 0 35 37" fill="none" stroke="#0b93f0" strokeWidth="3.2">
              <circle cx="21" cy="18" r="4.6" />
              <path d="M12.9 9.9A11.5 11.5 0 0 1 31.5 13.3M31.5 22.7A11.5 11.5 0 0 1 12.9 26.1M31.5 13.3A11.5 11.5 0 0 1 31.5 22.7" strokeWidth="3" />
              <path d="M25 1.5A17.5 17.5 0 0 1 34 7M34 29.5A17.5 17.5 0 0 1 25 35M10 13.5Q9 18 10 22.5" />
              <path d="M4.5 12.5Q3 18 4.5 24" strokeWidth="3.4" />
            </svg>
          </DockLogo>
          <DockTile>
            <svg width="29" height="24" viewBox="0 0 29 24">
              <rect x="1" y="1" width="27" height="22" fill="#262626" stroke="#dcdcdc" strokeWidth="2" />
              <path d="M3 3H26V12L3 18Z" fill="#444" />
              <path d="M5 6L9 8.5L5 11M10 12.5H15" stroke="#eee" strokeWidth="1.6" fill="none" />
            </svg>
          </DockTile>
          <DockTile>
            <svg width="27" height="27" viewBox="0 0 27 27">
              <rect width="27" height="27" rx="3" fill="#fce6d4" />
              <circle cx="13.5" cy="13.5" r="4" fill="none" stroke="#6db33f" strokeWidth="1.6" />
              <path d="M13.5 4V7.5M13.5 19.5V23M4 13.5H7.5M19.5 13.5H23M7 7L9.3 9.3M17.7 17.7L20 20M20 7L17.7 9.3M9.3 17.7L7 20" stroke="#6db33f" strokeWidth="1.6" />
            </svg>
          </DockTile>
          <DockTile>
            <svg width="28" height="28" viewBox="0 0 28 28">
              <path d="M2 1H25V27H2Z" fill="#ececea" />
              <path d="M6 1V27" stroke="#efb0b0" strokeWidth=".7" />
              <path d="M7 6H20M7 9H20M7 12H18M7 15H16M7 18H13" stroke="#bdbdbd" />
              <path d="M12 20L22 9.5L25.5 12.5L16 23Z" fill="#3a3a3a" />
              <path d="M12 19.5L16 23L11 24.5Z" fill="#e5d267" />
              <circle cx="25.3" cy="10" r="2.2" fill="#d68ac4" />
            </svg>
          </DockTile>
          <DockTile>
            <svg width="31" height="27" viewBox="0 0 31 27">
              <path d="M0 1H12L16 4H31V10H0Z" fill="#174c82" />
              <path d="M0 7H31V27H0Z" fill="#3b87d0" />
              <path d="M8 6H31L28 8.5L17 15Z" fill="#fff" />
            </svg>
          </DockTile>
          <DockTile>
            <svg width="30" height="30" viewBox="0 0 30 30">
              <circle cx="15" cy="15" r="14.3" fill="#5f93f2" />
              <path d="M2.5 8A14.3 14.3 0 0 1 28 9H15A6 6 0 0 0 9 15Z" fill="#3d69cf" />
              <path d="M28 9A14.3 14.3 0 0 1 15 29.3L20.5 18A6 6 0 0 0 18 9Z" fill="#a3c0f8" />
              <circle cx="15" cy="15" r="6.7" fill="#dbe6fc" />
              <circle cx="15" cy="15" r="5.2" fill="#4285f4" />
            </svg>
          </DockTile>
          <DockTile><KdenliveIcon /></DockTile>
        </Dock>
        <Screen>
          <Panel>
            <KdenliveIcon gray />
            <PanelTitle $w={605}>Clip de título — Kdenlive</PanelTitle>
            <Gap $w={10} />
            <Tray />
            <PanelClock>3:57:38</PanelClock>
            <DateBlock>2017-06-19<br />07:50</DateBlock>
            <UserName>Wachín</UserName>
            <WinControls>
              <svg width="50" height="14" viewBox="0 0 50 14" fill="none" stroke="#ccc">
                <path d="M0 12.5H10" strokeWidth="2" />
                <path d="M20.5 5H27.5V12H20.5Z" strokeWidth="1.6" />
                <path d="M41 5L48 12M48 5L41 12" strokeWidth="2" />
              </svg>
            </WinControls>
          </Panel>
          <TitleBar>
            <TitleSpacer><Knob /></TitleSpacer>
            <TitleText $pad={26}>Clip de título — Kdenlive</TitleText>
            <TitleButtons>
              <RoundButton $bg="#6b6b6b"><svg width="8" height="8"><path d="M1 1.5H7V6.5H1Z" fill="none" stroke="#333" /></svg></RoundButton>
              <RoundButton $bg="#6b6b6b"><svg width="6" height="6"><path d="M.5 .5L5.5 5.5M5.5 .5L.5 5.5" stroke="#2d2d2d" strokeWidth="1.2" /></svg></RoundButton>
            </TitleButtons>
          </TitleBar>
          <Body>
            <TopRow>
              {tools}
              <Button $w={83} $dim>+<u>X</u></Button>
              <Spin w={74} v="0" ml={8} />
              <Gap $w={8} />
              <Button $w={83} $dim>+<u>Y</u></Button>
              <Spin w={74} v="0" ml={8} />
              <Label $dim $ml={7} $w={14}>W</Label>
              <Spin w={74} v="0" ml={8} />
              <Label $dim $ml={7} $w={11}>H</Label>
              <Spin w={74} v="0" ml={8} />
              <Gap $w={102} />
              {[0, 1, 2, 3].map((k) => (
                <React.Fragment key={k}>
                  <MiniButton><LinesIcon kind={k} /></MiniButton>
                  <Gap $w={k < 3 ? 8 : 7} />
                </React.Fragment>
              ))}
              <Label $dim $w={95}>Profundidad:</Label>
              <Spin w={74} v="0" ml={8} />
            </TopRow>
            <Middle>
              <Stage>
                <Checker><SafeOuter><SafeInner /></SafeOuter></Checker>
              </Stage>
              <Side>
                <FormRow $mb={7}>
                  <Label>Duración</Label>
                  <Input $w={283}>00:00:05,00</Input>
                </FormRow>
                <HLine />
                <FormRow><Label>Zoom:</Label><Spin w={283} v="1%" /></FormRow>
                <FormRow><Label>Rotación X:</Label><Spin w={283} v="0" /></FormRow>
                <FormRow><Label>Rotación Y:</Label><Spin w={283} v="0" /></FormRow>
                <FormRow><Label>Rotación Z:</Label><Spin w={283} v="0" /></FormRow>
                <AlignRow>
                  {["M2 1V13M5 4H12V10H5Z", "M7 1V13M4 4H10V10H4Z", "M12 1V13M2 4H9V10H2Z", "M1 2H13M4 5H10V12H4Z", "M1 7H13M4 3H6V11H4Z", "M1 12H13M8 3H12V9H8Z"].map((d) => (
                    <MiniButton key={d}><svg width="14" height="14" fill="none" stroke="#777"><path d={d} /></svg></MiniButton>
                  ))}
                </AlignRow>
                <Tabs>
                  <Tab $w={107}>Propiedades</Tab>
                  <Tab $w={66}>Fondo</Tab>
                  <Tab $w={90}>Animación</Tab>
                </Tabs>
                <Pane>
                  <PaneRow $h={26}>
                    <Combo $w={295} $dim>
                      <ComboText $pad={5}>Ubuntu Header</ComboText>
                      <svg width="9" height="6" fill="#888"><path d="M1 0H8L4.5 5Z" /></svg>
                    </Combo>
                  </PaneRow>
                  <PaneRow $h={42}>
                    <Spin w={120} v="" />
                    <Combo $w={98} $dim $ml={9}><ComboText>Normal</ComboText><Updown /></Combo>
                    <MiniButton $ml={8}><svg width="12" height="14" fill="none" stroke="#555" strokeWidth="1.5"><path d="M3 1V7Q6 11 9 7V1M2 12.5H10" /></svg></MiniButton>
                    <MiniButton $ml={13} $on><svg width="10" height="14" fill="none" stroke="#777" strokeWidth="1.5"><path d="M1 4V1.5H9V4M6 1.5L4 12.5M2 12.5H6" /></svg></MiniButton>
                  </PaneRow>
                  <PaneRow $h={25}>
                    <Label $dim $w={129} $indent={25}>Solid Color</Label>
                    <Button $w={98} $dim $strong><Swatch /></Button>
                  </PaneRow>
                  <PaneRow $h={40}>
                    <Label $dim $w={129} $indent={25}>Gradient</Label>
                    <Combo $w={130} $dim $h={25}>
                      <ComboText>
                        <svg width="16" height="16"><defs><linearGradient id="g"><stop stopColor="#f0f0f0" /><stop offset="1" stopColor="#555" /></linearGradient></defs><rect width="16" height="16" fill="url(#g)" /></svg>
                        Gradient
                      </ComboText>
                      <Updown />
                    </Combo>
                    <MiniButton $ml={9}><svg width="14" height="14" fill="none" stroke="#777"><path d="M1.5 12.5L2.5 9L10 1.5L12.5 4L5 11.5ZM8.5 3L11 5.5" /></svg></MiniButton>
                  </PaneRow>
                  <PaneRow $h={27}>
                    <Label $dim $w={129}>Contorno</Label>
                    <Spin w={98} v="1" />
                    <Gap $w={8} />
                    <Button $w={61} $dim $strong><Swatch /></Button>
                  </PaneRow>
                  <PaneRow $h={35}><Label $dim $bold $indent={23}>Sombra</Label></PaneRow>
                  <PaneRow $h={34}>
                    <Label $dim $w={129}>Alinear</Label>
                    <MiniButton $pressed><TextAlign d="M1 3.5H13M1 5.5H8M3 8.5H7M1 11.5H9M4 14.5H7" /></MiniButton>
                    <MiniButton $ml={15}><TextAlign d="M1 3.5H13M3 5.5H11M1 8.5H13M3 11.5H11M5 14.5H9" /></MiniButton>
                    <MiniButton $ml={14}><TextAlign d="M1 3.5H13M6 5.5H13M7 8.5H13M5 11.5H13M7 14.5H12" /></MiniButton>
                  </PaneRow>
                  <PaneRow $h={32}><Label $dim $w={129}>Letter Spacing</Label><Spin w={98} v="0" /></PaneRow>
                  <PaneRow $h={36}><Label $dim $w={129}>Line Spacing</Label><Spin w={98} v="0" /></PaneRow>
                  <MiniButton $ml={1} $mt={3}><svg width="14" height="14" fill="none" stroke="#888" strokeWidth="1.4"><path d="M1.5 1V9Q3.5 14 5.5 9V1M7.5 12V2L10.5 12V3M12.8 5V12M12.8 1.5V3" /></svg></MiniButton>
                </Pane>
              </Side>
            </Middle>
            <Footer>
              <FootRow $h={22} $pad={1}>
                <MiniButton><svg width="13" height="13" fill="none" stroke="currentColor"><path d="M.5.5H12.5V12.5H.5Z" /><path d="M1 12L5 7L8 9L12 5V8L8 12Z" fill="currentColor" /></svg></MiniButton>
                <MiniButton $ml={8}><svg width="13" height="13" fill="none" stroke="currentColor"><path d="M1.5 0V13M11.5 0V13M3.5 1.5H9.5M3.5 12H9.5" /><path d="M6.5 2V12" strokeWidth="2" /></svg></MiniButton>
                <MiniButton $ml={8}><GroupIcon x /></MiniButton>
                <MiniButton $ml={8} $on><GroupIcon /></MiniButton>
                <MiniButton $ml={8}><svg width="14" height="14" fill="none" stroke="currentColor"><path d="M1 2.5H13M1 12.5H13M2.5 1V14M12.5 1V14M5 11L10 5M5 9V11H7" /></svg></MiniButton>
                <Gap $w={10} />
                <CheckBox />
                <Label $ml={8}><u>U</u>se grid</Label>
              </FootRow>
              <FootRow $h={42} $pad={4}>
                <svg width="13" height="13" fill="none" stroke="#555"><path d="M.5 3V.5H3M10 .5H12.5V3M.5 10V12.5H3M12.5 10V12.5H10M3.5 3.5H9.5V9.5H3.5ZM6.5 1V3M6.5 10V12M1 6.5H3M10 6.5H12" /></svg>
                <Gap $w={15} />
                <svg width="13" height="13" fill="none" stroke="#444" strokeWidth="1.2"><path d="M.6 3V.6H3M10 .6H12.4V3M.6 10V12.4H3M12.4 10V12.4H10M2.6 2.6H10.4V10.4H2.6Z" /></svg>
                <Divider $h={28} $ml={11} $mr={11} />
                <Slider>
                  <svg width="145" height="22" viewBox="0 0 145 22">
                    <rect x="0" y="8.5" width="144" height="3.5" rx="1.7" fill="#d9d9d9" />
                    <path d="M1 9H144" stroke="#b8b8b8" />
                    <rect x="0" y="8" width="12" height="5" rx="2.5" fill="#dd6a2c" />
                    <path d="M9.5 1.5H16Q18.5 1.5 18.5 4V15L13 20.5L7.5 15V4Q7.5 1.5 9.5 1.5Z" fill="#f6f6f6" stroke="#a2a2a2" />
                    <path d="M10.5 8.5H15.5M10.5 11H15.5M10.5 13.5H15.5" stroke="#bbb" />
                  </svg>
                </Slider>
                <Spin w={83} v="64%" on ml={9} />
                <Divider $h={28} $ml={7} $mr={11} />
                <CheckBox />
                <Label $ml={8} $w={123}><u>M</u>ostrar el fondo</Label>
                <Divider $h={28} $ml={11} $mr={8} />
                <Label $w={72}>Plantilla:</Label>
                <Combo $w={271}><ComboText /><Updown gap={1} /></Combo>
                <Gap $w={212} />
                <Button $w={83}><u>C</u>ancel</Button>
                <Gap $w={8} />
                <Button $w={83} $primary><u>O</u>K</Button>
              </FootRow>
            </Footer>
          </Body>
        </Screen>
        <FileDialog />
        <Note>{"Missing image\nthumbnail in\nUbuntuStudio\ndefault XFCE\nenvironment\n(customized)"}</Note>
        <Overlay width="1280" height="768" viewBox="0 0 1280 768">
          <path d="M734.5 401.5V418L738 414.5L741 420.5L743.5 419.3L741 413.5H746Z" fill="#fff" stroke="#111" strokeWidth="1.1" />
          <g fill="#ff0028">
            <path d="M156.5 74L202.5 31L198.7 51L251 32L253 44L204 62.3L221 76Z" />
            <path d="M413 385L439 327.5L441.7 348L463 327L477 333L451 356.7L472 361Z" />
            <path d="M617.5 399L663.7 353.5L659.3 374.3L701 358.5L704 369L664.3 385L682 398Z" />
          </g>
          <g fill="rgba(255,255,255,.94)" stroke="#ff0028" strokeWidth="4.6">
            <circle cx="265.3" cy="35" r="15.6" />
            <circle cx="482" cy="314.3" r="15.6" />
            <circle cx="716.3" cy="358.2" r="15.6" />
          </g>
          <g fill="#ff0028" fontFamily="DejaVu Sans" fontSize="18.67" textAnchor="middle">
            <text x="265" y="42">1</text>
            <text x="482" y="321">2</text>
            <text x="716.3" y="365">3</text>
          </g>
        </Overlay>
      </Desktop>
    </>
  );
}
